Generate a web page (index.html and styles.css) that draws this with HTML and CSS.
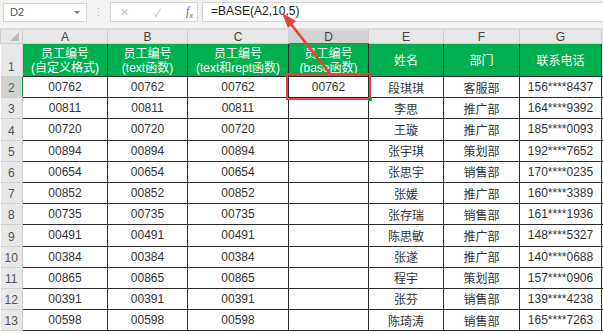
FILE: index.html
```html
<!DOCTYPE html>
<html lang="zh">
<head>
    <meta charset="UTF-8">
    <title>BASE函数</title>
    <link rel="stylesheet" href="styles.css">
</head>
<body>
    <div class="sheet">
        <div class="toolbar">
            <div class="name-box">
                <span>D2</span>
                <span class="caret"></span>
            </div>
            <div class="grip">⋮</div>
            <div class="fx-box">
                <span class="fx-btn cancel">✕</span>
                <span class="fx-btn ok">✓</span>
                <span class="fx-btn fx"><i>f</i><sub>x</sub></span>
            </div>
            <div class="formula">=BASE(A2,10,5)</div>
        </div>

        <table class="grid">
            <colgroup>
                <col class="c-rh"><col class="c-a"><col class="c-b"><col class="c-c">
                <col class="c-d"><col class="c-e"><col class="c-f"><col class="c-g"><col class="c-h">
            </colgroup>
            <thead>
                <tr class="col-heads">
                    <th class="corner"><span class="tri"></span></th>
                    <th>A</th><th>B</th><th>C</th><th class="sel">D</th><th>E</th><th>F</th><th>G</th><th class="edge"></th>
                </tr>
            </thead>
            <tbody id="rows">
                <tr class="head-row">
                    <th class="rn">1</th>
                    <td class="g">员工编号<br>(自定义格式)</td>
                    <td class="g">员工编号<br>(text函数)</td>
                    <td class="g">员工编号<br>(text和rept函数)</td>
                    <td class="g">员工编号<br>(base函数)</td>
                    <td class="g">姓名</td>
                    <td class="g">部门</td>
                    <td class="g">联系电话</td>
                    <td class="edge"></td>
                </tr>
            </tbody>
        </table>

        <div class="sel-box"><span class="handle"></span></div>
        <svg class="arrow" width="603" height="334" viewBox="0 0 603 334">
            <line x1="331" y1="75" x2="290" y2="23" stroke="#e8423b" stroke-width="2.6"/>
            <polygon points="282,13 296,21 288,28" fill="#e8423b"/>
        </svg>
    </div>

    <script>
        const data = [
            ['00762', '段琪琪', '客服部', '156****8437'],
            ['00811', '李思', '推广部', '164****9392'],
            ['00720', '王璇', '推广部', '185****0093'],
            ['00894', '张宇琪', '策划部', '192****7652'],
            ['00654', '张思宇', '销售部', '170****0235'],
            ['00852', '张媛', '推广部', '160****3389'],
            ['00735', '张存瑞', '销售部', '161****1936'],
            ['00491', '陈思敏', '推广部', '148****5327'],
            ['00384', '张遂', '推广部', '140****0688'],
            ['00865', '程宇', '策划部', '157****0906'],
            ['00391', '张芬', '销售部', '139****4238'],
            ['00598', '陈琦涛', '销售部', '165****7263']
        ];

        const rows = document.getElementById('rows');
        data.forEach(function(item, i) {
            const tr = document.createElement('tr');
            tr.className = 'data-row';
            const num = i + 2;
            const d = num === 2 ? item[0] : '';
            tr.innerHTML =
                '<th class="rn' + (num === 2 ? ' sel' : '') + '">' + num + '</th>' +
                '<td>' + item[0] + '</td>' +
                '<td>' + item[0] + '</td>' +
                '<td>' + item[0] + '</td>' +
                '<td>' + d + '</td>' +
                '<td>' + item[1] + '</td>' +
                '<td>' + item[2] + '</td>' +
                '<td>' + item[3] + '</td>' +
                '<td class="edge"></td>';
            rows.appendChild(tr);
        });
    </script>
</body>
</html>
```

FILE: styles.css
```css
body {
    margin: 0;
    padding: 0;
    background-color: #fff;
    font-family: 'Liberation Sans', 'Noto Sans CJK SC', sans-serif;
    overflow: hidden;
}
.sheet {
    position: relative;
    width: 603px;
    height: 334px;
    overflow: hidden;
    background-color: #fff;
}
.toolbar {
    display: flex;
    align-items: center;
    height: 29px;
    padding: 0 0 0 3px;
    box-sizing: border-box;
    background-color: #f3f3f3;
    border-bottom: 1px solid #dcdcdc;
}
.name-box {
    display: flex;
    align-items: center;
    justify-content: space-between;
    width: 84px;
    height: 19px;
    margin-top: -4px;
    padding: 0 6px 0 6px;
    box-sizing: border-box;
    background-color: #fff;
    border: 1px solid #d6d6d6;
    font-size: 11px;
    color: #555;
}
.caret {
    width: 0;
    height: 0;
    border-left: 3px solid transparent;
    border-right: 3px solid transparent;
    border-top: 3px solid #777;
}
.grip {
    width: 23px;
    text-align: center;
    margin-top: -4px;
    color: #bbb;
    font-size: 11px;
}
.fx-box {
    display: flex;
    align-items: center;
    justify-content: space-between;
    width: 88px;
    height: 20px;
    margin-top: -4px;
    padding: 0 4px 0 9px;
    box-sizing: border-box;
    background-color: #fff;
    border: 1px solid #d6d6d6;
}
.fx-btn {
    font-size: 11px;
    color: #c4c4c4;
}
.fx-btn.fx {
    color: #666;
    font-family: 'Liberation Serif', serif;
    font-size: 12px;
}
.fx-btn.fx sub {
    font-size: 8px;
    font-style: italic;
}
.formula {
    flex-grow: 1;
    height: 20px;
    margin: -4px 0 0 4px;
    padding: 1px 0 0 8px;
    box-sizing: border-box;
    background-color: #fff;
    border: 1px solid #d6d6d6;
    border-right: none;
    font-size: 12px;
    color: #222;
}
.grid {
    border-collapse: collapse;
    table-layout: fixed;
    width: 610px;
    font-size: 12px;
    color: #333;
}
.c-rh { width: 22px; }
.c-a { width: 85px; }
.c-b { width: 80px; }
.c-c { width: 101px; }
.c-d { width: 80px; }
.c-e { width: 75px; }
.c-f { width: 76px; }
.c-g { width: 82px; }
.c-h { width: 9px; }
.col-heads th {
    height: 13px;
    padding: 0;
    background-color: #e8e8e8;
    border: 1px solid #cfcfcf;
    border-top: 1px solid #dcdcdc;
    font-weight: normal;
    font-size: 12px;
    color: #444;
    line-height: 12px;
}
.col-heads th.sel {
    background-color: #d2d2d2;
    border-bottom: 1px solid #2a8a4a;
}
.col-heads th.corner {
    position: relative;
    background-color: #e8e8e8;
}
.tri {
    position: absolute;
    right: 3px;
    bottom: 2px;
    width: 0;
    height: 0;
    border-left: 9px solid transparent;
    border-bottom: 9px solid #bdbdbd;
}
.rn {
    padding: 0 0 2px 0;
    background-color: #e8e8e8;
    border: 1px solid #cfcfcf;
    border-left: none;
    font-weight: normal;
    font-size: 12px;
    color: #555;
    vertical-align: bottom;
    text-align: center;
}
.rn.sel {
    background-color: #d2d2d2;
    color: #2a7a44;
    border-right: 1px solid #2a8a4a;
}
.head-row {
    height: 33px;
}
.data-row {
    height: 21.2px;
}
.grid td {
    padding: 0;
    border: 1px solid #2b2b2b;
    text-align: center;
    white-space: nowrap;
    overflow: hidden;
}
.grid td.g {
    background-color: #00b050;
    color: #fff;
    line-height: 14px;
    padding-top: 1px;
}
.grid td.edge {
    border-right: none;
}
.sel-box {
    position: absolute;
    left: 286px;
    top: 73px;
    width: 81px;
    height: 23px;
    border: 2px solid #e8423b;
}
.handle {
    position: absolute;
    right: -3px;
    bottom: -3px;
    width: 4px;
    height: 4px;
    background-color: #2a8a4a;
}
.arrow {
    position: absolute;
    left: 0;
    top: 0;
    pointer-events: none;
}
```
